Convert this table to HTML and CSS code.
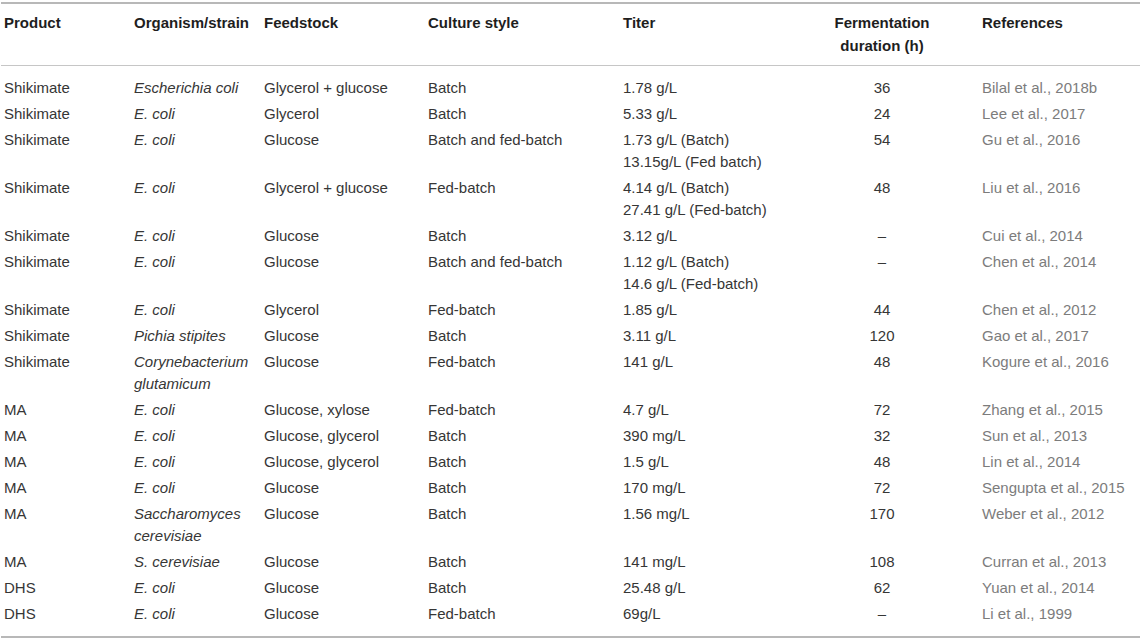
FILE: index.html
```html
<!DOCTYPE html>
<html lang="en">
<head>
    <meta charset="UTF-8">
    <meta name="viewport" content="width=device-width, initial-scale=1.0">
    <title>Production of shikimate, MA and DHS</title>
    <link rel="stylesheet" href="styles.css">
</head>
<body>
    <table class="data-table">
        <colgroup>
            <col class="col-product">
            <col class="col-organism">
            <col class="col-feedstock">
            <col class="col-culture">
            <col class="col-titer">
            <col class="col-duration">
            <col class="col-refs">
        </colgroup>
        <thead>
            <tr>
                <th>Product</th>
                <th>Organism/strain</th>
                <th>Feedstock</th>
                <th>Culture style</th>
                <th>Titer</th>
                <th class="center">Fermentation<br>duration (h)</th>
                <th>References</th>
            </tr>
        </thead>
        <tbody>
            <tr>
                <td>Shikimate</td>
                <td><i>Escherichia coli</i></td>
                <td>Glycerol + glucose</td>
                <td>Batch</td>
                <td>1.78 g/L</td>
                <td class="center">36</td>
                <td class="ref">Bilal et al., 2018b</td>
            </tr>
            <tr>
                <td>Shikimate</td>
                <td><i>E. coli</i></td>
                <td>Glycerol</td>
                <td>Batch</td>
                <td>5.33 g/L</td>
                <td class="center">24</td>
                <td class="ref">Lee et al., 2017</td>
            </tr>
            <tr>
                <td>Shikimate</td>
                <td><i>E. coli</i></td>
                <td>Glucose</td>
                <td>Batch and fed-batch</td>
                <td>1.73 g/L (Batch)<br>13.15g/L (Fed batch)</td>
                <td class="center">54</td>
                <td class="ref">Gu et al., 2016</td>
            </tr>
            <tr>
                <td>Shikimate</td>
                <td><i>E. coli</i></td>
                <td>Glycerol + glucose</td>
                <td>Fed-batch</td>
                <td>4.14 g/L (Batch)<br>27.41 g/L (Fed-batch)</td>
                <td class="center">48</td>
                <td class="ref">Liu et al., 2016</td>
            </tr>
            <tr>
                <td>Shikimate</td>
                <td><i>E. coli</i></td>
                <td>Glucose</td>
                <td>Batch</td>
                <td>3.12 g/L</td>
                <td class="center">–</td>
                <td class="ref">Cui et al., 2014</td>
            </tr>
            <tr>
                <td>Shikimate</td>
                <td><i>E. coli</i></td>
                <td>Glucose</td>
                <td>Batch and fed-batch</td>
                <td>1.12 g/L (Batch)<br>14.6 g/L (Fed-batch)</td>
                <td class="center">–</td>
                <td class="ref">Chen et al., 2014</td>
            </tr>
            <tr>
                <td>Shikimate</td>
                <td><i>E. coli</i></td>
                <td>Glycerol</td>
                <td>Fed-batch</td>
                <td>1.85 g/L</td>
                <td class="center">44</td>
                <td class="ref">Chen et al., 2012</td>
            </tr>
            <tr>
                <td>Shikimate</td>
                <td><i>Pichia stipites</i></td>
                <td>Glucose</td>
                <td>Batch</td>
                <td>3.11 g/L</td>
                <td class="center">120</td>
                <td class="ref">Gao et al., 2017</td>
            </tr>
            <tr>
                <td>Shikimate</td>
                <td><i>Corynebacterium<br>glutamicum</i></td>
                <td>Glucose</td>
                <td>Fed-batch</td>
                <td>141 g/L</td>
                <td class="center">48</td>
                <td class="ref">Kogure et al., 2016</td>
            </tr>
            <tr>
                <td>MA</td>
                <td><i>E. coli</i></td>
                <td>Glucose, xylose</td>
                <td>Fed-batch</td>
                <td>4.7 g/L</td>
                <td class="center">72</td>
                <td class="ref">Zhang et al., 2015</td>
            </tr>
            <tr>
                <td>MA</td>
                <td><i>E. coli</i></td>
                <td>Glucose, glycerol</td>
                <td>Batch</td>
                <td>390 mg/L</td>
                <td class="center">32</td>
                <td class="ref">Sun et al., 2013</td>
            </tr>
            <tr>
                <td>MA</td>
                <td><i>E. coli</i></td>
                <td>Glucose, glycerol</td>
                <td>Batch</td>
                <td>1.5 g/L</td>
                <td class="center">48</td>
                <td class="ref">Lin et al., 2014</td>
            </tr>
            <tr>
                <td>MA</td>
                <td><i>E. coli</i></td>
                <td>Glucose</td>
                <td>Batch</td>
                <td>170 mg/L</td>
                <td class="center">72</td>
                <td class="ref">Sengupta et al., 2015</td>
            </tr>
            <tr>
                <td>MA</td>
                <td><i>Saccharomyces<br>cerevisiae</i></td>
                <td>Glucose</td>
                <td>Batch</td>
                <td>1.56 mg/L</td>
                <td class="center">170</td>
                <td class="ref">Weber et al., 2012</td>
            </tr>
            <tr>
                <td>MA</td>
                <td><i>S. cerevisiae</i></td>
                <td>Glucose</td>
                <td>Batch</td>
                <td>141 mg/L</td>
                <td class="center">108</td>
                <td class="ref">Curran et al., 2013</td>
            </tr>
            <tr>
                <td>DHS</td>
                <td><i>E. coli</i></td>
                <td>Glucose</td>
                <td>Batch</td>
                <td>25.48 g/L</td>
                <td class="center">62</td>
                <td class="ref">Yuan et al., 2014</td>
            </tr>
            <tr>
                <td>DHS</td>
                <td><i>E. coli</i></td>
                <td>Glucose</td>
                <td>Fed-batch</td>
                <td>69g/L</td>
                <td class="center">–</td>
                <td class="ref">Li et al., 1999</td>
            </tr>
        </tbody>
    </table>
</body>
</html>
```

FILE: styles.css
```css
body {
    margin: 0;
    padding: 2px 0 0 1px;
    font-family: "Liberation Sans", Arial, sans-serif;
    font-size: 15px;
    color: #363636;
    background-color: #fff;
}

.data-table {
    width: 1139px;
    table-layout: fixed;
    border-collapse: separate;
    border-spacing: 0;
    border-top: 2px solid #b8b8b8;
    border-bottom: 2px solid #b8b8b8;
}

.col-product { width: 130px; }
.col-organism { width: 130px; }
.col-feedstock { width: 164px; }
.col-culture { width: 195px; }
.col-titer { width: 165px; }
.col-duration { width: 194px; }
.col-refs { width: 161px; }

.data-table th {
    text-align: left;
    vertical-align: top;
    font-weight: bold;
    color: #1e1e1e;
    line-height: 23px;
    padding: 7px 3px 8px 3px;
    border-bottom: 1px solid #c6c6c6;
}

.data-table td {
    vertical-align: top;
    line-height: 22px;
    padding: 2px 3px;
    white-space: nowrap;
}

.data-table tbody tr:first-child td {
    padding-top: 11px;
}

.data-table tbody tr:last-child td {
    padding-bottom: 11px;
}

.data-table .center {
    text-align: center;
}

.data-table .ref {
    color: #7c7c7c;
}
```
